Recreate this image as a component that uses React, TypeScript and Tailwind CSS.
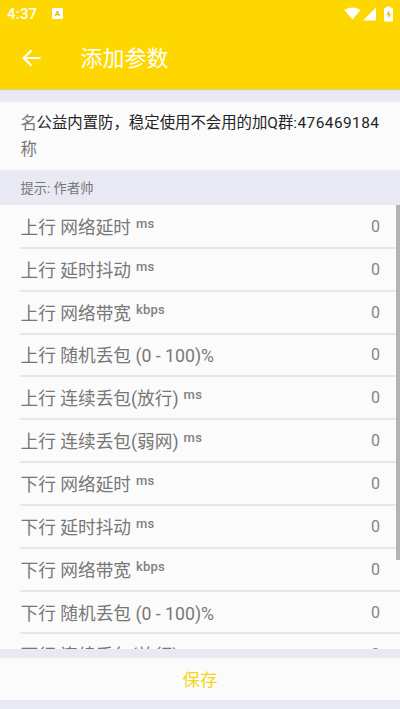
type Param = { label: string; unit?: string };

const params: Param[] = [
  { label: "上行 网络延时", unit: "ms" },
  { label: "上行 延时抖动", unit: "ms" },
  { label: "上行 网络带宽", unit: "kbps" },
  { label: "上行 随机丢包 (0 - 100)%" },
  { label: "上行 连续丢包(放行)", unit: "ms" },
  { label: "上行 连续丢包(弱网)", unit: "ms" },
  { label: "下行 网络延时", unit: "ms" },
  { label: "下行 延时抖动", unit: "ms" },
  { label: "下行 网络带宽", unit: "kbps" },
  { label: "下行 随机丢包 (0 - 100)%" },
  { label: "下行 连续丢包(放行)", unit: "ms" },
];

function StatusBar() {
  return (
    <div className="flex h-[27px] items-center pl-[7px] pr-[7px] text-white">
      <span className="w-[45px] pt-px text-[15px] font-medium leading-[27px] tracking-[0.2px]">4:37</span>
      <span className="flex h-[11px] w-[11px] items-center justify-center rounded-[1.5px] bg-white text-[8px] font-bold leading-none text-[#e0b800]">
        A
      </span>
      <div className="ml-auto flex items-center">
        <svg className="h-[13px] w-[17px]" viewBox="0 0 17 14" preserveAspectRatio="none" fill="currentColor">
          <path d="M.3 3.2C5-.4 12-.4 16.7 3.2L8.5 13.5Z" />
        </svg>
        <svg className="ml-[2px] h-[14px] w-[13px]" viewBox="0 0 13 14" fill="currentColor">
          <path d="M13 .5V13.5H0Z" />
        </svg>
        <svg className="ml-[8px] h-[16px] w-[9px]" viewBox="0 0 9 16" fill="currentColor">
          <path d="M2.5.5h4v1.2H8q1 0 1 1V14.5q0 1-1 1H1q-1 0-1-1V2.7q0-1 1-1h1.5Z" />
          <path d="M5.2 4.2 2.3 9h2v3.5L7 7.8H5.2Z" fill="#e3bd20" />
        </svg>
      </div>
    </div>
  );
}

function ParamRow({ label, unit }: Param) {
  return (
    <div className="ml-5 flex h-[42.85px] shrink-0 items-center border-b-2 border-[#e7e7e7] pr-5 text-[#777]">
      <span className="whitespace-pre pl-[0.5px] pt-[3px] text-[17.7px] leading-6">{label}</span>
      {unit && (
        <span className="mb-[5px] ml-[5px] text-[13px] font-medium leading-4 tracking-[0.2px] text-[#808080]">
          {unit}
        </span>
      )}
      <span className="ml-auto pt-px text-[16px] text-[#858585]">0</span>
    </div>
  );
}

export default function App() {
  return (
    <div className="flex h-[709px] w-[400px] flex-col overflow-hidden bg-[#e8e9f2] font-[Roboto,'Noto_Sans_CJK_SC',sans-serif]">
      <header className="h-[89px] shrink-0 bg-[#fed700] text-white shadow-[0_1px_1px_#d9d09b]">
        <StatusBar />
        <div className="flex h-[61px] items-center pl-[22px]">
          <svg
            className="h-[18px] w-[19px]"
            viewBox="0 0 19 18"
            fill="none"
            stroke="currentColor"
            strokeWidth="2.2"
          >
            <path d="M18.5 9H2M9.5 1.2 1.7 9l7.8 7.8" />
          </svg>
          <h1 className="ml-[39.5px] pt-[2px] text-[22px] font-normal leading-8">添加参数</h1>
        </div>
      </header>

      <section className="mt-[13px] flex h-[68px] shrink-0 bg-[#fbfbfb] pl-[20.5px] pt-[9px]">
        <span className="w-[16px] break-all text-[16.5px] leading-[26px] text-[#777]">名称</span>
        <span className="whitespace-nowrap text-[15.4px] leading-6 text-[#252525]">
          公益内置防，稳定使用不会用的加Q群<span className="tracking-[0.45px]">:476469184</span>
        </span>
      </section>

      <p className="flex h-[35px] shrink-0 items-center pl-[20.5px] pt-[2px] text-[13.3px] text-[#777]">
        提示: 作者帅
      </p>

      <main className="flex h-[444px] shrink-0 overflow-hidden bg-[#fbfbfb]">
        <div className="flex flex-1 flex-col pt-px">
          {params.map((p) => (
            <ParamRow key={p.label} {...p} />
          ))}
        </div>
        <div className="-ml-1 h-[355px] w-1 bg-[#b4b4b4]" />
      </main>

      <button className="mt-[9px] h-[42px] shrink-0 bg-[#fbfbfb] pt-px text-[17.5px] leading-[42px] text-[#f5d51b]">
        保存
      </button>
    </div>
  );
}
